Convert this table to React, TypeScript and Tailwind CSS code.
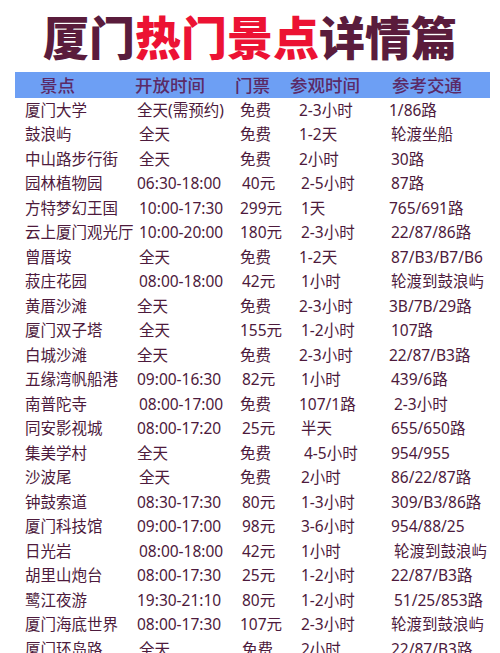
const rows: [string, string, string, string, string][] = [
  ['厦门大学', '全天(需预约)', '免费', '2-3小时', '1/86路'],
  ['鼓浪屿', ' 全天', '免费', '1-2天', ' 轮渡坐船'],
  ['中山路步行街', ' 全天', '免费', '2小时', ' 30路'],
  ['园林植物园', '06:30-18:00', ' 40元', ' 2-5小时', ' 87路'],
  ['方特梦幻王国', ' 10:00-17:30', '299元', ' 1天', '765/691路'],
  ['云上厦门观光厅', ' 10:00-20:00', '180元', ' 2-3小时', ' 22/87/86路'],
  ['曾厝垵', ' 全天', '免费', '1-2天', ' 87/B3/B7/B6'],
  ['菽庄花园', ' 08:00-18:00', ' 42元', ' 1小时', ' 轮渡到鼓浪屿'],
  ['黄厝沙滩', '全天', '免费', '2-3小时', '3B/7B/29路'],
  ['厦门双子塔', ' 全天', '155元', ' 1-2小时', ' 107路'],
  ['白城沙滩', '全天', '免费', '2-3小时', '22/87/B3路'],
  ['五缘湾帆船港', '09:00-16:30', ' 82元', ' 1小时', ' 439/6路'],
  ['南普陀寺', ' 08:00-17:00', '免费', '107/1路', '  2-3小时'],
  ['同安影视城', '08:00-17:20', ' 25元', ' 半天', ' 655/650路'],
  ['集美学村', '全天', '免费', '  4-5小时', ' 954/955'],
  ['沙波尾', ' 全天', '免费', ' 2小时', ' 86/22/87路'],
  ['钟鼓索道', '08:30-17:30', ' 80元', ' 1-3小时', ' 309/B3/86路'],
  ['厦门科技馆', '09:00-17:00', ' 98元', ' 3-6小时', ' 954/88/25'],
  ['日光岩', ' 08:00-18:00', ' 42元', ' 1小时', '  轮渡到鼓浪屿'],
  ['胡里山炮台', '08:00-17:30', ' 25元', ' 1-2小时', ' 22/87/B3路'],
  ['鹭江夜游', '19:30-21:10', ' 80元', ' 1-2小时', '  51/25/853路'],
  ['厦门海底世界', '08:00-17:30', '107元', ' 2-3小时', ' 轮渡到鼓浪屿'],
  ['厦门环岛路', ' 全天', ' 免费', ' 2小时', ' 22/87/B3路'],
];

const titleFont = { fontFamily: '"Noto Sans CJK SC", sans-serif' };
const bodyFont = { fontFamily: '"Noto Sans", "Noto Sans CJK SC", sans-serif' };

function Cell({ text }: { text: string }) {
  // leading spaces in the data stand for the small nudges in the picture
  const lead = text.length - text.trimStart().length;
  const pad = lead === 0 ? 'pl-0' : lead === 1 ? 'pl-[2px]' : 'pl-[5px]';
  return <div className={`${pad} whitespace-nowrap`}>{text.trim()}</div>;
}

export default function App() {
  return (
    <div className="w-[500px] h-[653px] overflow-hidden bg-white" style={titleFont}>
      {/* Title */}
      <div className="h-[72px] flex items-center justify-center pb-[3px]">
        <h1 className="text-[46px] leading-none font-black whitespace-nowrap text-[#5a1c3c]">
          厦门<span className="text-[#ec1233]">热门景点</span>详情篇
        </h1>
      </div>

      {/* Header bar */}
      <div className="mx-[15px] w-[475px] h-[26px] bg-[#6d9ff4] grid grid-cols-[120px_100px_55px_102px_1fr] items-center text-[17.5px] leading-none font-medium text-[#5b2a66]">
        <div className="pl-[25px]">景点</div>
        <div>开放时间</div>
        <div>门票</div>
        <div>参观时间</div>
        <div>参考交通</div>
      </div>

      {/* Rows */}
      <div style={bodyFont}>
        {rows.map((r) => (
          <div
            key={r[0]}
            className="h-[24.5px] grid grid-cols-[137px_103px_59px_90px_1fr] items-center text-[15.5px] leading-none text-[#4d1a3c]"
          >
            <div className="pl-[25px] whitespace-nowrap">{r[0]}</div>
            <Cell text={r[1]} />
            <Cell text={r[2]} />
            <Cell text={r[3]} />
            <Cell text={r[4]} />
          </div>
        ))}
      </div>
    </div>
  );
}
